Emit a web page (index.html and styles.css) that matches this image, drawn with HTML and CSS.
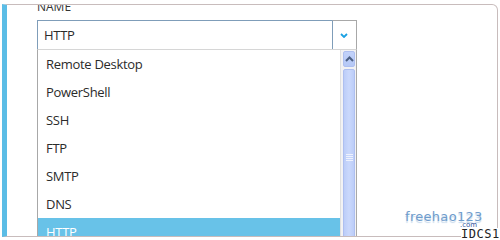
FILE: index.html
```html
<!DOCTYPE html>
<html lang="en">
<head>
    <meta charset="UTF-8">
    <meta name="viewport" content="width=device-width, initial-scale=1.0">
    <link rel="stylesheet" href="styles.css">
    <title>Endpoint Name</title>
</head>
<body>
    <div class="card">
        <div class="field">
            <label class="field-label">NAME</label>
            <div class="select">
                <span class="select-value">HTTP</span>
                <span class="select-arrow">
                    <svg width="8" height="5" viewBox="0 0 8 5">
                        <path d="M1 1 L4 4 L7 1" fill="none" stroke="#1ba1e2" stroke-width="1.8"/>
                    </svg>
                </span>
            </div>
            <div class="dropdown">
                <ul class="options">
                    <li>Remote Desktop</li>
                    <li>PowerShell</li>
                    <li>SSH</li>
                    <li>FTP</li>
                    <li>SMTP</li>
                    <li>DNS</li>
                    <li class="selected">HTTP</li>
                </ul>
                <div class="scrollbar">
                    <div class="scroll-btn">
                        <svg width="9" height="6" viewBox="0 0 9 6">
                            <path d="M1 5 L4.5 1.5 L8 5" fill="none" stroke="#4d6185" stroke-width="2"/>
                        </svg>
                    </div>
                    <div class="scroll-thumb">
                        <span class="grip"></span>
                    </div>
                </div>
            </div>
        </div>
    </div>

    <!-- screenshot watermark, sits over the card edge -->
    <div class="watermark">
        <span class="wm-site">freehao123</span>
        <span class="wm-com">.com</span>
        <span class="wm-idc">IDCS1</span>
    </div>
</body>
</html>
```

FILE: styles.css
```css
body {
    margin: 0;
    background: #fff;
    font-family: "Open Sans", "Noto Sans", sans-serif;
    color: #2b2b2b;
}

.card {
    box-sizing: border-box;
    width: 496px;
    height: 233px;
    margin: 4px 0 0 2px;
    padding-left: 30px;
    background: #fff;
    border: 1px solid #c8bcbc;
    border-left: 5px solid #5bbde6;
    border-top-right-radius: 6px;
    overflow: hidden;
}

.field {
    width: 320px;
}

.field-label {
    display: block;
    margin-top: -6px;
    margin-bottom: 6px;
    font-size: 12px;
    line-height: 15px;
    color: #333;
}

.select {
    display: flex;
    height: 29px;
}

.select-value {
    flex: 1;
    padding-left: 6px;
    font-size: 13px;
    letter-spacing: -0.3px;
    line-height: 29px;
    border-top: 1px solid #7f9db9;
    border-left: 1px solid #7f9db9;
    box-sizing: border-box;
}

.select-arrow {
    width: 25px;
    box-sizing: border-box;
    display: flex;
    align-items: center;
    justify-content: center;
    padding-right: 2px;
    border-left: 1px solid #7f9db9;
    border-top: 1px solid #a8a8a8;
    border-right: 1px solid #a8a8a8;
}

.dropdown {
    display: flex;
    border: 1px solid #a8a8a8;
    border-top-color: #d6d6d6;
}

.options {
    list-style: none;
    margin: 0;
    padding: 0;
    width: 302px;
}

.options li {
    height: 28px;
    padding-left: 8px;
    font-size: 13px;
    letter-spacing: -0.3px;
    line-height: 28px;
}

.options li.selected {
    background: #68c2e8;
    color: #fff;
}

.scrollbar {
    width: 16px;
    box-sizing: border-box;
    padding: 1px 1px 1px 2px;
    background: #f2f2f4;
    border-left: 1px solid #e0e0e0;
    display: flex;
    flex-direction: column;
    gap: 2px;
}

.scroll-btn {
    height: 14px;
    border: 1px solid #aebff0;
    border-radius: 2px;
    background: linear-gradient(#c2d2fa, #b5c8f6);
    display: flex;
    align-items: center;
    justify-content: center;
}

.scroll-thumb {
    flex: 1;
    border: 1px solid #aebff0;
    border-radius: 2px;
    background: linear-gradient(90deg, #bccdf8, #cad8fc 50%, #bccdf8);
    display: flex;
    align-items: center;
    justify-content: center;
}

.grip {
    width: 7px;
    height: 7px;
    background: repeating-linear-gradient(#eef2fe 0 1px, transparent 1px 2px);
}

.watermark {
    position: absolute;
    left: 405px;
    top: 209px;
    width: 95px;
    height: 31px;
}

.wm-site {
    position: absolute;
    left: 0;
    top: 0;
    font-family: "DejaVu Sans", sans-serif;
    font-size: 13px;
    color: #6f9ccc;
    letter-spacing: 0.3px;
    text-shadow: 0 2px 1px #c4d7ea;
}

.wm-com {
    position: absolute;
    left: 55px;
    top: 13px;
    font-family: "DejaVu Sans", sans-serif;
    font-size: 7px;
    line-height: 7px;
    color: #3355a0;
}

.wm-idc {
    position: absolute;
    left: 56px;
    top: 19px;
    font-family: "DejaVu Sans Mono", monospace;
    font-size: 12px;
    line-height: 12px;
    letter-spacing: 0.5px;
    color: #222;
    background: #fff;
}
```
